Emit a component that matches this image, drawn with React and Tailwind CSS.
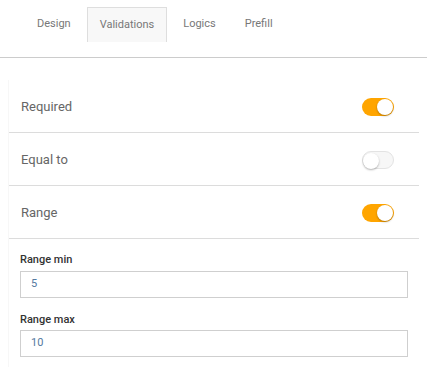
const tabs = ["Design", "Validations", "Logics", "Prefill"];

function Toggle({ on }) {
  return (
    <span
      className={
        "relative inline-block h-[18px] w-[32px] rounded-full " +
        (on ? "bg-[#ffa500]" : "border border-[#e3e3e3] bg-[#f7f7f7]")
      }
    >
      <span
        className={
          "absolute top-[1px] h-[16px] w-[16px] rounded-full bg-white shadow-[0_1px_2px_rgba(0,0,0,0.3)] " +
          (on ? "right-[1px]" : "left-0 top-0")
        }
      />
    </span>
  );
}

function SwitchRow({ label, on }) {
  return (
    <div className="flex h-[53px] items-center justify-between border-b border-[#dcdcdc] pl-[12px] pr-[25px] pt-[2px]">
      <span className="text-[13px] text-[#666]">{label}</span>
      <Toggle on={on} />
    </div>
  );
}

function Field({ label, value }) {
  return (
    <div className="flex flex-col">
      <label className="text-[11px] font-medium text-[#333]">{label}</label>
      <div className="mt-[2px] flex h-[27px] items-center border border-[#cfcfcf] px-[10px] text-[11px] text-[#5479a0]">
        {value}
      </div>
    </div>
  );
}

export default function App() {
  return (
    <div className="h-[391px] w-[427px] bg-white font-['Roboto',sans-serif]">
      <div className="flex h-[58px] items-start gap-[3px] border-b border-[#cccccc] pl-[24px] pt-[7px]">
        {tabs.map((t) => (
          <div
            key={t}
            className={
              "flex h-[35px] items-center px-[12px] text-[11px] text-[#777] " +
              (t === "Validations" ? "border border-b-0 border-[#dedede] bg-[#f8f8f8]" : "border border-transparent")
            }
          >
            {t}
          </div>
        ))}
      </div>
      <div className="mx-[8px] mt-[22px] h-[287px] border-l border-[#f7f7f7]">
        <SwitchRow label="Required" on />
        <SwitchRow label="Equal to" on={false} />
        <SwitchRow label="Range" on />
        <div className="flex flex-col gap-[14px] pl-[11px] pr-[11px] pt-[13px]">
          <Field label="Range min" value="5" />
          <Field label="Range max" value="10" />
        </div>
      </div>
    </div>
  );
}
